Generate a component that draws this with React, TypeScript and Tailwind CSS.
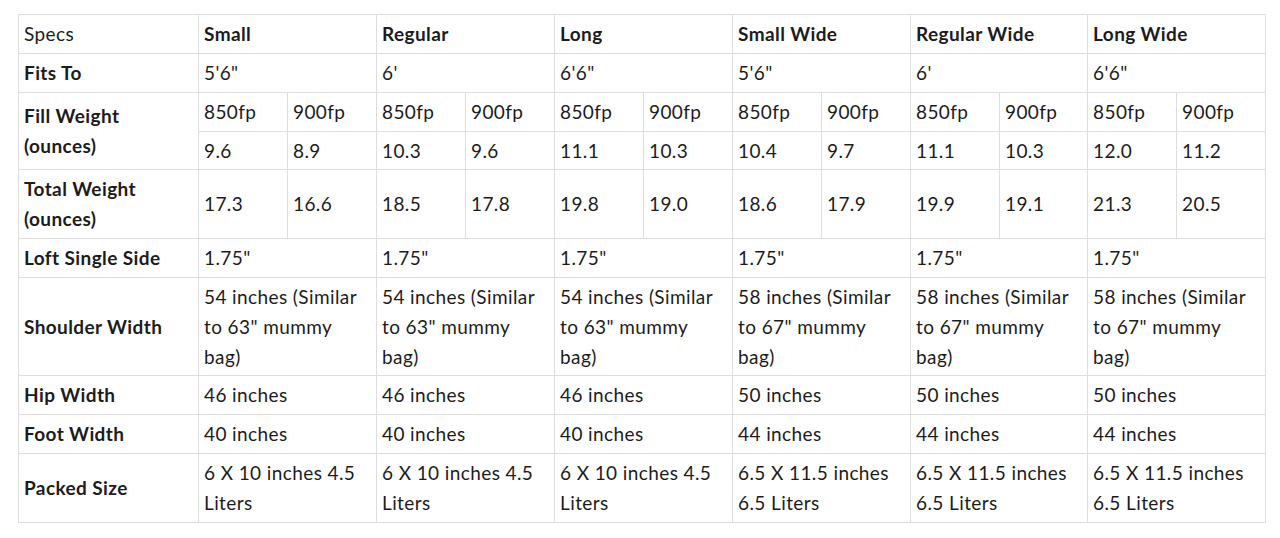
const sizes = ["Small", "Regular", "Long", "Small Wide", "Regular Wide", "Long Wide"];

const cell = "border border-[#dedede] px-[5px] py-1 align-middle";
const head = `${cell} font-bold`;

function Pairs({ values }: { values: string[] }) {
  return (
    <>
      {values.map((v, i) => (
        <td key={i} className={cell}>
          {v}
        </td>
      ))}
    </>
  );
}

function Spans({ values }: { values: React.ReactNode[] }) {
  return (
    <>
      {values.map((v, i) => (
        <td key={i} colSpan={2} className={cell}>
          {v}
        </td>
      ))}
    </>
  );
}

const shoulder = (a: string, b: string) => (
  <>
    {a} inches (Similar
    <br />
    to {b}" mummy
    <br />
    bag)
  </>
);

const packedSmall = (
  <>
    6 X 10 inches 4.5
    <br />
    Liters
  </>
);

const packedWide = (
  <>
    6.5 X 11.5 inches
    <br />
    6.5 Liters
  </>
);

export default function App() {
  const cols = [180, 89, 89, 89, 89, 89, 89, 89, 89, 89, 88, 89, 89];
  return (
    <div className="w-[1280px] h-[538px] bg-white pt-[14px] pl-[18px] text-[#1c1c1c] text-[19px] tracking-[0.4px] leading-[29.85px] font-['Lato','Liberation_Sans',sans-serif]">
      <table className="table-fixed border-collapse w-[1247px]">
        <colgroup>
          {cols.map((w, i) => (
            <col key={i} style={{ width: w }} />
          ))}
        </colgroup>
        <tbody>
          <tr>
            <td className={cell}>Specs</td>
            {sizes.map((s) => (
              <td key={s} colSpan={2} className={head}>
                {s}
              </td>
            ))}
          </tr>
          <tr>
            <td className={head}>Fits To</td>
            <Spans values={["5'6\"", "6'", "6'6\"", "5'6\"", "6'", "6'6\""]} />
          </tr>
          <tr>
            <td rowSpan={2} className={head}>
              Fill Weight
              <br />
              (ounces)
            </td>
            <Pairs values={Array(6).fill(["850fp", "900fp"]).flat()} />
          </tr>
          <tr>
            <Pairs values={["9.6", "8.9", "10.3", "9.6", "11.1", "10.3", "10.4", "9.7", "11.1", "10.3", "12.0", "11.2"]} />
          </tr>
          <tr>
            <td className={head}>
              Total Weight
              <br />
              (ounces)
            </td>
            <Pairs values={["17.3", "16.6", "18.5", "17.8", "19.8", "19.0", "18.6", "17.9", "19.9", "19.1", "21.3", "20.5"]} />
          </tr>
          <tr>
            <td className={head}>Loft Single Side</td>
            <Spans values={Array(6).fill("1.75\"")} />
          </tr>
          <tr>
            <td className={head}>Shoulder Width</td>
            <Spans
              values={[
                shoulder("54", "63"),
                shoulder("54", "63"),
                shoulder("54", "63"),
                shoulder("58", "67"),
                shoulder("58", "67"),
                shoulder("58", "67"),
              ]}
            />
          </tr>
          <tr>
            <td className={head}>Hip Width</td>
            <Spans values={["46 inches", "46 inches", "46 inches", "50 inches", "50 inches", "50 inches"]} />
          </tr>
          <tr>
            <td className={head}>Foot Width</td>
            <Spans values={["40 inches", "40 inches", "40 inches", "44 inches", "44 inches", "44 inches"]} />
          </tr>
          <tr>
            <td className={head}>Packed Size</td>
            <Spans values={[packedSmall, packedSmall, packedSmall, packedWide, packedWide, packedWide]} />
          </tr>
        </tbody>
      </table>
    </div>
  );
}
